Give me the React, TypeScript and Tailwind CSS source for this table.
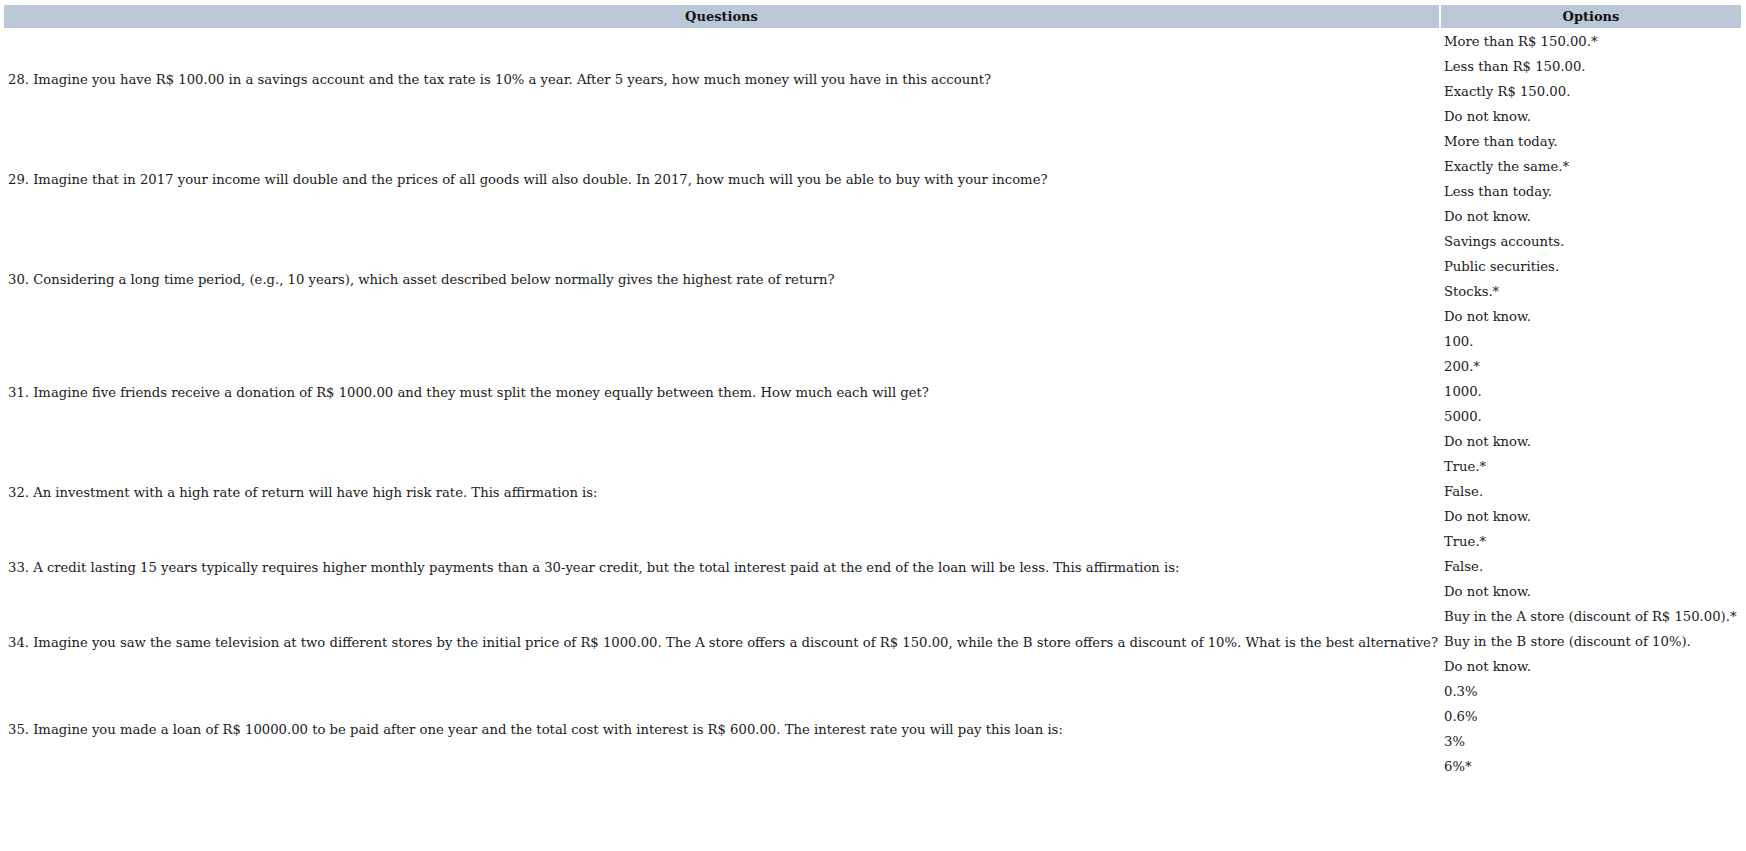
const questions: { q: string; options: string[] }[] = [
  {
    q: '28. Imagine you have R$ 100.00 in a savings account and the tax rate is 10% a year. After 5 years, how much money will you have in this account?',
    options: ['More than R$ 150.00.*', 'Less than R$ 150.00.', 'Exactly R$ 150.00.', 'Do not know.'],
  },
  {
    q: '29. Imagine that in 2017 your income will double and the prices of all goods will also double. In 2017, how much will you be able to buy with your income?',
    options: ['More than today.', 'Exactly the same.*', 'Less than today.', 'Do not know.'],
  },
  {
    q: '30. Considering a long time period, (e.g., 10 years), which asset described below normally gives the highest rate of return?',
    options: ['Savings accounts.', 'Public securities.', 'Stocks.*', 'Do not know.'],
  },
  {
    q: '31. Imagine five friends receive a donation of R$ 1000.00 and they must split the money equally between them. How much each will get?',
    options: ['100.', '200.*', '1000.', '5000.', 'Do not know.'],
  },
  {
    q: '32. An investment with a high rate of return will have high risk rate. This affirmation is:',
    options: ['True.*', 'False.', 'Do not know.'],
  },
  {
    q: '33. A credit lasting 15 years typically requires higher monthly payments than a 30-year credit, but the total interest paid at the end of the loan will be less. This affirmation is:',
    options: ['True.*', 'False.', 'Do not know.'],
  },
  {
    q: '34. Imagine you saw the same television at two different stores by the initial price of R$ 1000.00. The A store offers a discount of R$ 150.00, while the B store offers a discount of 10%. What is the best alternative?',
    options: ['Buy in the A store (discount of R$ 150.00).*', 'Buy in the B store (discount of 10%).', 'Do not know.'],
  },
  {
    q: '35. Imagine you made a loan of R$ 10000.00 to be paid after one year and the total cost with interest is R$ 600.00. The interest rate you will pay this loan is:',
    options: ['0.3%', '0.6%', '3%', '6%*'],
  },
];

export default function App() {
  return (
    <div className="min-h-[851px] bg-white pt-[3px] pl-[2px] text-[#1a1a1a] font-['DejaVu_Serif','Liberation_Serif',serif] text-[13.2px]">
      <table className="border-separate border-spacing-[2px] table-fixed">
        <colgroup>
          <col className="w-[1435px]" />
          <col className="w-[300px]" />
        </colgroup>
        <thead>
          <tr className="h-[23px]">
            <th className="bg-[#bcc8d8] p-0 text-center text-[13px] font-bold text-[#111]">Questions</th>
            <th className="bg-[#bcc8d8] p-0 text-center text-[13px] font-bold text-[#111]">Options</th>
          </tr>
        </thead>
        <tbody>
          {questions.map((item) =>
            item.options.map((opt, i) => (
              <tr key={item.q.slice(0, 3) + i} className="h-[23px]">
                {i === 0 && (
                  <td rowSpan={item.options.length} className="p-0 pl-[4px] pt-[2px] align-middle whitespace-nowrap">
                    {item.q}
                  </td>
                )}
                <td className="p-0 pl-[3px] pt-[1px] align-middle whitespace-nowrap">{opt}</td>
              </tr>
            )),
          )}
        </tbody>
      </table>
    </div>
  );
}
